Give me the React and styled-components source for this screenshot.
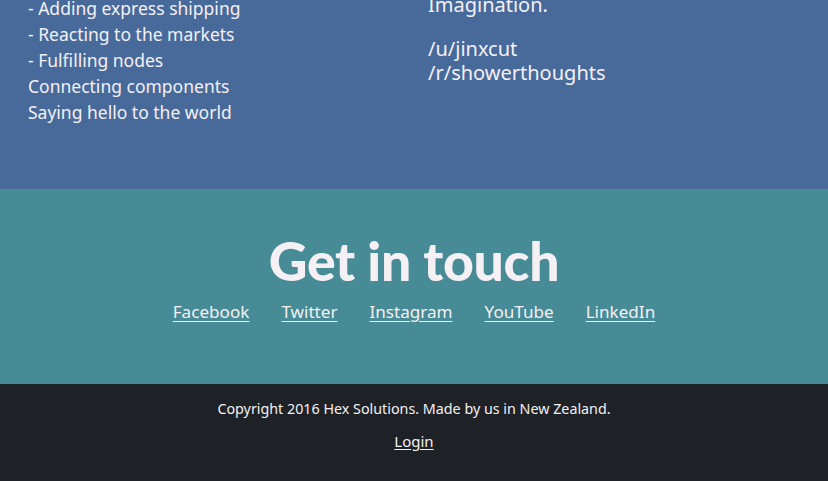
import React from "react";
import styled, { createGlobalStyle } from "styled-components";

const Global = createGlobalStyle`
  html, body { margin: 0; padding: 0; overflow: hidden; }
  body {
    font-family: "Noto Sans", "DejaVu Sans", sans-serif;
    color: #f4f0f4;
    background: #1e2226;
  }
`;

const Page = styled.div`
  display: flex;
  flex-direction: column;
`;

const About = styled.section`
  background: #486a9b;
  height: 189px;
  overflow: hidden;
  display: grid;
  grid-template-columns: 1fr 1fr;
  padding: 0 0 0 28px;
`;

const Column = styled.div`
  margin-top: ${(p) => p.$offset}px;
  font-size: ${(p) => p.$size}px;
  line-height: ${(p) => p.$lh}px;
`;

const Line = styled.div`
  white-space: nowrap;
  min-height: ${(p) => (p.$blank ? "1em" : "0")};
`;

const Contact = styled.section`
  background: #478b96;
  height: 195px;
  display: flex;
  flex-direction: column;
  align-items: center;
  padding-top: 40px;
  box-sizing: border-box;
`;

const Heading = styled.h2`
  margin: 0;
  font-family: "Lato", "Inter", sans-serif;
  font-weight: 900;
  font-size: 53.5px;
  line-height: 62px;
  letter-spacing: -0.3px;
  color: #f4f0f4;
`;

const Links = styled.nav`
  display: flex;
  gap: 32px;
  margin-top: 9px;
`;

const Link = styled.a`
  color: #f4f0f4;
  font-size: 17.1px;
  line-height: 24px;
  text-decoration: underline;
  text-underline-offset: 3px;
`;

const Footer = styled.footer`
  background: #1e2226;
  height: 97px;
  display: flex;
  flex-direction: column;
  align-items: center;
  padding-top: 15px;
  box-sizing: border-box;
  font-size: 14.3px;
  line-height: 20px;
`;

const Copy = styled.p`
  margin: 0;
`;

const LoginLink = styled.a`
  margin-top: 12px;
  color: #f4f0f4;
  font-size: 15px;
  text-decoration: underline;
  text-underline-offset: 2px;
`;

export default function App() {
  return (
    <Page>
      <Global />
      <About>
        <Column $offset={-5} $size={17.5} $lh={26}>
          <Line>- Adding express shipping</Line>
          <Line>- Reacting to the markets</Line>
          <Line>- Fulfilling nodes</Line>
          <Line>Connecting components</Line>
          <Line>Saying hello to the world</Line>
        </Column>
        <Column $offset={-7} $size={20} $lh={24}>
          <Line>Imagination.</Line>
          <Line $blank> </Line>
          <Line>/u/jinxcut</Line>
          <Line>/r/showerthoughts</Line>
        </Column>
      </About>
      <Contact>
        <Heading>Get in touch</Heading>
        <Links>
          <Link href="#">Facebook</Link>
          <Link href="#">Twitter</Link>
          <Link href="#">Instagram</Link>
          <Link href="#">YouTube</Link>
          <Link href="#">LinkedIn</Link>
        </Links>
      </Contact>
      <Footer>
        <Copy>Copyright 2016 Hex Solutions. Made by us in New Zealand.</Copy>
        <LoginLink href="#">Login</LoginLink>
      </Footer>
    </Page>
  );
}
